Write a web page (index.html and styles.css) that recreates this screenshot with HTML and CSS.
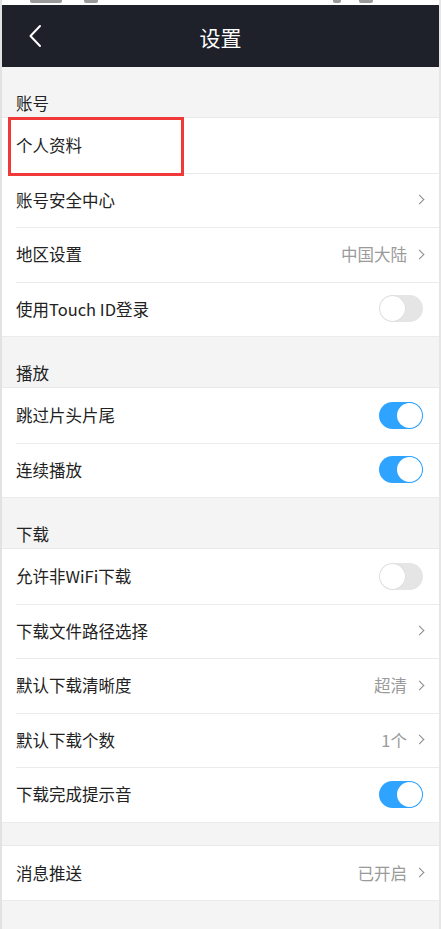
FILE: index.html
```html
<!DOCTYPE html>
<html lang="zh-CN">
<head>
<meta charset="utf-8">
<title>设置</title>
<link rel="stylesheet" href="styles.css">
</head>
<body>
<div class="frame">
  <div class="status">
    <span class="sb sb1"></span><span class="sb sb2"></span>
    <span class="spacer"></span>
    <span class="sb sb3"></span><span class="sb sb4"></span>
  </div>
  <header class="nav">
    <svg class="back" width="14" height="24" viewBox="0 0 14 24"><path d="M12 2 L2.5 12 L12 22" fill="none" stroke="#fff" stroke-width="2" stroke-linecap="round" stroke-linejoin="round"/></svg>
    <div class="title">设置</div>
  </header>

  <div class="sec-title">账号</div>
  <div class="group">
    <div class="row highlight-wrap"><span class="label">个人资料</span><span class="hl"></span></div>
    <div class="row"><span class="label">账号安全中心</span><span class="right"><i class="chev"></i></span></div>
    <div class="row"><span class="label">地区设置</span><span class="right"><span class="val">中国大陆</span><i class="chev"></i></span></div>
    <div class="row"><span class="label">使用Touch ID登录</span><span class="toggle"></span></div>
  </div>

  <div class="sec-title">播放</div>
  <div class="group">
    <div class="row"><span class="label">跳过片头片尾</span><span class="toggle on"></span></div>
    <div class="row"><span class="label">连续播放</span><span class="toggle on"></span></div>
  </div>

  <div class="sec-title">下载</div>
  <div class="group">
    <div class="row"><span class="label">允许非WiFi下载</span><span class="toggle"></span></div>
    <div class="row"><span class="label">下载文件路径选择</span><span class="right"><i class="chev"></i></span></div>
    <div class="row"><span class="label">默认下载清晰度</span><span class="right"><span class="val">超清</span><i class="chev"></i></span></div>
    <div class="row"><span class="label">默认下载个数</span><span class="right"><span class="val">1个</span><i class="chev"></i></span></div>
    <div class="row"><span class="label">下载完成提示音</span><span class="toggle on"></span></div>
  </div>

  <div class="gap"></div>
  <div class="group">
    <div class="row"><span class="label">消息推送</span><span class="right"><span class="val">已开启</span><i class="chev"></i></span></div>
  </div>
  <div class="tail"></div>
</div>
</body>
</html>
```
FILE: styles.css
```css
* { box-sizing: border-box; }
html, body { margin: 0; padding: 0; }
body {
  background: #f4f4f4;
  font-family: "Noto Sans CJK SC", "Noto Sans", sans-serif;
  color: #222;
}
.frame {
  width: 441px;
  min-height: 929px;
  border-left: 2px solid #e2e2e2;
  border-right: 2px solid #e6e6e6;
  background: #f4f4f4;
}
.status {
  height: 5px;
  background: #fff;
  display: flex;
  align-items: flex-start;
  padding: 0 28px;
  gap: 18px;
}
.status .spacer { flex: 1; }
.sb { display: block; height: 3px; background: #9a9a9a; border-radius: 0 0 2px 2px; }
.sb1 { width: 32px; }
.sb2 { width: 14px; margin-left: 4px; }
.sb3 { width: 8px; }
.sb4 { width: 14px; margin-right: 38px; }
.nav {
  height: 62px;
  background: #1e212a;
  display: flex;
  align-items: center;
  padding-left: 26px;
}
.back { display: block; }
.title {
  flex: 1;
  text-align: center;
  color: #fff;
  font-size: 21px;
  margin-left: -40px;
  padding-top: 2px;
}
.sec-title {
  height: 51px;
  display: flex;
  align-items: flex-end;
  padding: 0 0 2px 14px;
  font-size: 16.5px;
  color: #222;
  border-bottom: 1px solid #e9e9e9;
}
.group {
  background: #fff;
  border-bottom: 1px solid #ebebeb;
}
.row {
  height: 54.5px;
  display: flex;
  align-items: center;
  padding: 0 16px 0 14px;
  position: relative;
}
.row + .row::before {
  content: "";
  position: absolute;
  left: 14px;
  right: 0;
  top: 0;
  border-top: 1px solid #ebebeb;
}
.label { flex: 1; font-size: 16.5px; color: #222; }
.right { display: flex; align-items: center; gap: 9px; }
.val { font-size: 16.5px; color: #9a9a9a; }
.chev {
  display: block;
  width: 7px;
  height: 7px;
  border-top: 1.5px solid #8a8a8a;
  border-right: 1.5px solid #8a8a8a;
  transform: rotate(45deg);
  margin-right: 0;
}
.toggle {
  width: 44px;
  height: 27px;
  border-radius: 14px;
  background: #e5e5e5;
  position: relative;
  margin-right: 0;
}
.toggle::after {
  content: "";
  position: absolute;
  top: 1px;
  left: 1px;
  width: 25px;
  height: 25px;
  border-radius: 50%;
  background: #fff;
  box-shadow: 0 0 0 0.5px #d8d8d8;
}
.toggle.on { background: #2ea3ff; }
.toggle.on::after { left: 18px; box-shadow: 0 0 0 0.5px #2ea3ff; }
.hl {
  position: absolute;
  left: 6px;
  top: -1px;
  width: 176px;
  height: 59px;
  border: 3px solid #f03a3a;
  z-index: 2;
}
.gap { height: 23px; border-bottom: 1px solid #e9e9e9; }
.tail { height: 30px; }
```
